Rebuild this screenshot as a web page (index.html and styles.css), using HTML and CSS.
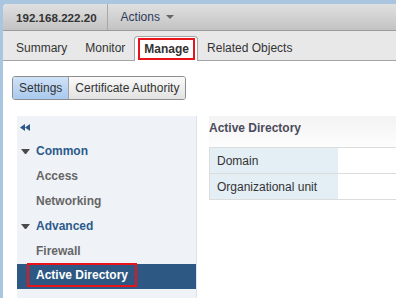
FILE: index.html
```html
<!DOCTYPE html>
<html lang="en">
<head>
  <meta charset="UTF-8" />
  <title>Manage - 192.168.222.20</title>
  <link rel="stylesheet" href="styles.css">
</head>
<body>
  <div class="frame">
    <header class="objbar">
      <span class="obj-name">192.168.222.20</span>
      <span class="divider"></span>
      <span class="actions">Actions <span class="caret"></span></span>
    </header>

    <nav class="tabs">
      <span class="tab">Summary</span>
      <span class="tab">Monitor</span>
      <span class="tab active"><span class="hl">Manage</span></span>
      <span class="tab">Related Objects</span>
    </nav>

    <main class="content">
      <div class="seg">
        <span class="seg-btn on">Settings</span>
        <span class="seg-btn">Certificate Authority</span>
      </div>

      <div class="split">
        <aside class="sidebar">
          <div class="collapse">
            <svg width="10" height="7" viewBox="0 0 10 7">
              <polygon points="0,3.5 5,0 5,7" fill="#2b5886"/>
              <polygon points="5,3.5 10,0 10,7" fill="#2b5886"/>
            </svg>
          </div>
          <div class="group"><span class="tri"></span>Common</div>
          <div class="item">Access</div>
          <div class="item">Networking</div>
          <div class="group"><span class="tri"></span>Advanced</div>
          <div class="item">Firewall</div>
          <div class="item selected"><span class="hl">Active Directory</span></div>
        </aside>

        <section class="detail">
          <h3 class="detail-title">Active Directory</h3>
          <table class="props">
            <tr><td class="key">Domain</td><td></td></tr>
            <tr><td class="key">Organizational unit</td><td></td></tr>
          </table>
        </section>
      </div>
    </main>
  </div>
</body>
</html>
```

FILE: styles.css
```css
* {
  margin: 0;
  padding: 0;
  box-sizing: border-box;
}

html, body {
  height: 100%;
}

body {
  background: #a9c5df;
  font-family: "Liberation Sans", Arial, sans-serif;
  font-size: 12px;
  color: #333;
  overflow: hidden;
  padding: 4px 0 0 3px;
}

.frame {
  height: 100%;
  display: flex;
  flex-direction: column;
  background: #fff;
  border-top-left-radius: 4px;
  overflow: hidden;
}

/* object header */
.objbar {
  height: 27px;
  flex-shrink: 0;
  display: flex;
  align-items: center;
  background: linear-gradient(#e0e0e0, #c3c3c3);
  border-bottom: 1px solid #9a9a9a;
  padding-left: 13px;
}

.obj-name {
  font-weight: bold;
  font-size: 11.6px;
  color: #333;
}

.divider {
  width: 1px;
  height: 26px;
  background: #a8a8a8;
  margin: 0 13px 0 10px;
}

.actions {
  color: #2d3b5c;
  display: flex;
  align-items: center;
}

.caret {
  margin-left: 6px;
  border-left: 4px solid transparent;
  border-right: 4px solid transparent;
  border-top: 4px solid #666;
}

/* tabs */
.tabs {
  height: 30px;
  flex-shrink: 0;
  display: flex;
  align-items: flex-end;
  background: #e8e8e8;
  border-bottom: 1px solid #a4a4a4;
  padding-left: 4px;
}

.tab {
  height: 25px;
  line-height: 25px;
  padding: 0 9px;
  color: #333;
  margin-bottom: -1px;
}

.tab.active {
  background: #fff;
  border: 1px solid #a4a4a4;
  border-bottom: none;
  border-top-left-radius: 4px;
  border-top-right-radius: 4px;
  font-weight: bold;
  padding: 1px 2px 0 3px;
  line-height: 18px;
}

.tab.active .hl {
  display: block;
  border: 2px solid #e8141b;
  padding: 0 4px 0 4px;
  line-height: 18px;
}

/* content */
.content {
  flex: 1;
  display: flex;
  flex-direction: column;
  padding: 15px 0 0 9px;
}

.seg {
  display: flex;
  align-self: flex-start;
  height: 24px;
  border: 1px solid #8d8d8d;
  border-radius: 3px;
  overflow: hidden;
}

.seg-btn {
  line-height: 22px;
  padding: 0 6px;
  background: linear-gradient(#fafafa, #e2e2e2);
  color: #333;
}

.seg-btn.on {
  background: linear-gradient(#cfe2f7, #a9c9ee);
  border-right: 1px solid #a0a0a0;
}

.split {
  flex: 1;
  display: flex;
  gap: 12px;
  margin: 16px 0 0 5px;
}

/* navigation */
.sidebar {
  width: 180px;
  flex-shrink: 0;
  background: #eff3f8;
  border-right: 1px solid #dde3ea;
}

.collapse {
  height: 23px;
  padding: 8px 0 0 3px;
}

.collapse svg {
  display: block;
}

.group,
.item {
  height: 25px;
  line-height: 25px;
  font-weight: bold;
}

.group {
  display: flex;
  align-items: center;
  color: #2c5a8a;
  padding-left: 4px;
}

.tri {
  width: 9px;
  margin-right: 6px;
  border-left: 4.5px solid transparent;
  border-right: 4.5px solid transparent;
  border-top: 5px solid #4a4a4a;
}

.item {
  color: #666;
  padding-left: 19px;
}

.item.selected {
  background: #2d5884;
  color: #fff;
  padding-left: 10px;
}

.item.selected .hl {
  display: inline-block;
  border: 2px solid #e8141b;
  padding: 0 7px;
  line-height: 20px;
  vertical-align: top;
  margin-top: -1px;
}

/* details */
.detail {
  flex: 1;
}

.detail-title {
  height: 31px;
  line-height: 24px;
  font-size: 12px;
  font-weight: bold;
  color: #4a4b5a;
  background: linear-gradient(#f3f3f3, #fdfdfd);
}

.props {
  width: 100%;
  border-collapse: collapse;
}

.props td {
  height: 26px;
  border-top: 1px solid #dcdcdc;
  border-bottom: 1px solid #dcdcdc;
  padding-left: 7px;
  color: #333;
}

.props .key {
  width: 128px;
  background: #e4eef5;
  border-left: 1px solid #dcdcdc;
}
```
